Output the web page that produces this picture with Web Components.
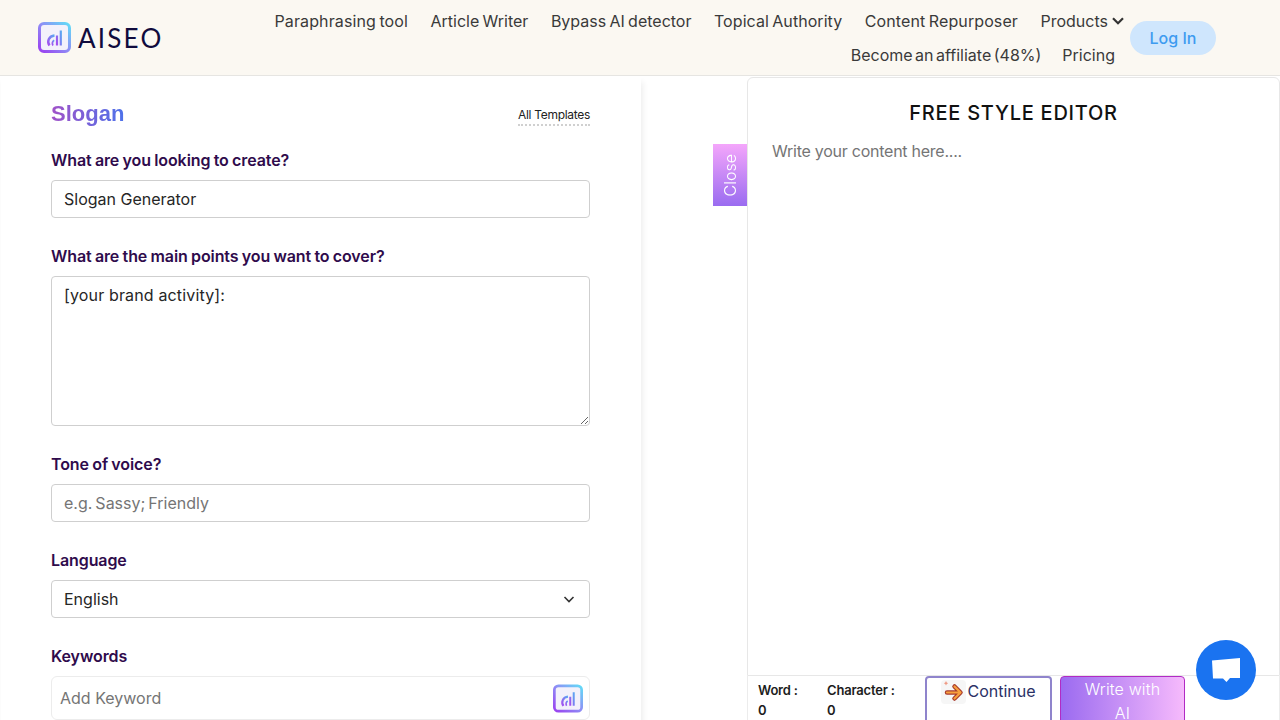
<!doctype html>
<html>
<head>
<meta charset="utf-8">
<title>AISEO Slogan</title>
<style>
html, body { margin: 0; height: 720px; overflow: hidden; background: #fff; font-family: Inter, "Liberation Sans", sans-serif; }
</style>
</head>
<body>
<aiseo-page></aiseo-page>

<script>
function logoMark(id, w, h) {
	return `<svg width="${w}" height="${h}" viewBox="0 0 33 31" fill="none" style="display:block">
		<defs>
			<linearGradient id="${id}" x1="0" y1="1" x2="1" y2="0">
				<stop offset="0" stop-color="#9a40f0"/><stop offset=".5" stop-color="#8f8cf5"/><stop offset="1" stop-color="#62dcf7"/>
			</linearGradient>
			<linearGradient id="${id}-in" x1="0" y1="1" x2="1" y2="0">
				<stop offset="0" stop-color="#a64df0"/><stop offset="1" stop-color="#5aa8f2"/>
			</linearGradient>
		</defs>
		<rect x="1.500" y="1.500" width="30" height="28" rx="4.500" stroke="url(#${id})" stroke-width="3" fill="#f3f1fb"/>
		<path d="M11.500 23.500c-2.800-3.800-.8-9.500 5-10" stroke="url(#${id}-in)" stroke-width="2.400"/>
		<path d="M15 23.500c-1.200-2-.6-4.200 1.200-5.200" stroke="url(#${id}-in)" stroke-width="1.800"/>
		<path d="M19 23.500v-10M22.800 23.500V8.500" stroke="url(#${id}-in)" stroke-width="2.200"/>
	</svg>`;
}

class BrandLogo extends HTMLElement {
	constructor() {
		super();
		this.attachShadow({ mode: 'open' }).innerHTML = `<style>
			:host { display: flex; align-items: center; gap: 7px; }
			span { font: 400 26px/1 Lato, Inter, sans-serif; letter-spacing: 2.200px; color: #100b3d; }
		</style>${logoMark('logo-a', 33, 31)}<span>AISEO</span>`;
	}
}

class NavLink extends HTMLElement {
	constructor() {
		super();
		this.attachShadow({ mode: 'open' }).innerHTML = `<style>
			:host { display: inline-flex; align-items: center; gap: 3px; height: 34px; font-size: 16px; word-spacing: -1.200px; color: #3a3a3a; white-space: nowrap; }
		</style><slot></slot>`;
	}
}

class SiteHeader extends HTMLElement {
	constructor() {
		super();
		this.attachShadow({ mode: 'open' }).innerHTML = `<style>
			:host { display: flex; height: 75px; background: #fbf8f2; border-bottom: 1px solid #e6e5e2; padding-left: 38px; padding-right: 64px; align-items: flex-start; }
			brand-logo { margin-top: 22px; }
			nav { flex: 1; display: flex; flex-direction: column; align-items: flex-end; margin-top: 4px; }
			.row { display: flex; gap: 22.500px; }
			.row.two { padding-right: 10px; gap: 21px; }
			.login { margin: 21px 0 0 5px; width: 86px; height: 34px; border-radius: 17px; background: #cfe6fd; color: #3d9bf0; font-size: 16px; font-weight: 500; display: flex; align-items: center; justify-content: center; }
			svg { display: block; }
		</style>
		<brand-logo></brand-logo>
		<nav>
			<div class="row">
				<nav-link style="letter-spacing:.12px">Paraphrasing tool</nav-link>
				<nav-link>Article Writer</nav-link>
				<nav-link>Bypass AI detector</nav-link>
				<nav-link style="letter-spacing:.06px">Topical Authority</nav-link>
				<nav-link style="letter-spacing:.11px">Content Repurposer</nav-link>
				<nav-link>Products<svg width="14" height="10" viewBox="0 0 14 10" fill="none"><path d="M2 2.200l5 5 5-5" stroke="#333" stroke-width="2.200"/></svg></nav-link>
			</div>
			<div class="row two">
				<nav-link style="word-spacing:-2px">Become an affiliate (48%)</nav-link>
				<nav-link>Pricing</nav-link>
			</div>
		</nav>
		<div class="login">Log In</div>`;
	}
}

class FormField extends HTMLElement {
	constructor() {
		super();
		this.attachShadow({ mode: 'open' }).innerHTML = `<style>
			:host { display: block; margin-bottom: 26px; }
			label { display: block; height: 24px; line-height: 24px; margin-bottom: 8px; font-size: 16px; font-weight: 600; color: #2f0b4c; letter-spacing: -.1px; word-spacing: -.6px; white-space: nowrap; }
		</style><label></label><slot></slot>`;
		this.shadowRoot.querySelector('label').textContent = this.getAttribute('label');
	}
}

class TextBox extends HTMLElement {
	constructor() {
		super();
		this.attachShadow({ mode: 'open' }).innerHTML = `<style>
			:host { display: flex; align-items: center; justify-content: space-between; box-sizing: border-box; height: 38px; padding: 0 12px; border: 1px solid #cfcfcf; border-radius: 4px; background: #fff; font-size: 16px; color: #262626; }
			:host([placeholder]) { color: #757575; }
			:host([soft]) { height: 44px; border-color: #ececec; border-radius: 6px; padding: 0 6px 0 8px; }
		</style><slot></slot>`;
	}
}

class AreaBox extends HTMLElement {
	constructor() {
		super();
		this.attachShadow({ mode: 'open' }).innerHTML = `<style>
			:host { display: block; height: 150px; }
			textarea { display: block; box-sizing: border-box; width: 100%; height: 150px; margin: 0; padding: 7px 12px; border: 1px solid #cfcfcf; border-radius: 4px; font: 400 16px/22px Inter, sans-serif; letter-spacing: .15px; color: #262626; background: #fff; outline: 0; }
		</style><textarea></textarea>`;
		this.shadowRoot.querySelector('textarea').textContent = this.getAttribute('text');
	}
}

class FormPanel extends HTMLElement {
	constructor() {
		super();
		this.attachShadow({ mode: 'open' }).innerHTML = `<style>
			:host { display: block; box-sizing: border-box; width: 640px; height: 644px; overflow: hidden; margin-left: 1px; padding: 22px 51px 0 50px; background: #fff; box-shadow: 2px 6px 6px rgba(0,0,0,.07); }
			.head { display: flex; justify-content: space-between; align-items: center; height: 30px; margin-bottom: 20px; }
			h1 { margin: 1px 0 0; font: 700 22px/30px "Liberation Sans", sans-serif; background: linear-gradient(90deg, #a152c8, #4e72ea); -webkit-background-clip: text; background-clip: text; color: transparent; }
			.all { font-size: 12px; line-height: 16px; color: #222; border-bottom: 2px dotted #d0d0d0; padding-bottom: 1px; margin-top: 7px; letter-spacing: -.3px; }
			svg { display: block; }
		</style>
		<div class="head"><h1>Slogan</h1><div class="all">All Templates</div></div>
		<form-field label="What are you looking to create?"><text-box>Slogan Generator</text-box></form-field>
		<form-field label="What are the main points you want to cover?"><area-box text="[your brand activity]:"></area-box></form-field>
		<form-field label="Tone of voice?"><text-box placeholder style="word-spacing:-1.500px">e.g. Sassy; Friendly</text-box></form-field>
		<form-field label="Language"><text-box>English<svg width="16" height="16" viewBox="0 0 16 16" fill="none"><path d="M3.500 6l4.500 4.500L12.500 6" stroke="#333" stroke-width="1.600"/></svg></text-box></form-field>
		<form-field label="Keywords"><text-box soft placeholder>Add Keyword${logoMark('logo-b', 30, 31)}</text-box></form-field>`;
	}
}

class CloseTab extends HTMLElement {
	constructor() {
		super();
		this.attachShadow({ mode: 'open' }).innerHTML = `<style>
			:host { display: flex; align-items: center; justify-content: center; width: 34px; height: 62px; margin-top: 68px; background: linear-gradient(180deg, #f4a6fb, #9a6cf0); color: #fff; font-size: 16px; font-weight: 300; }
			span { writing-mode: vertical-rl; transform: rotate(180deg); }
		</style><span>Close</span>`;
	}
}

class EditorPane extends HTMLElement {
	constructor() {
		super();
		this.attachShadow({ mode: 'open' }).innerHTML = `<style>
			:host { display: block; box-sizing: border-box; height: 599px; border: 1px solid #e7e7e7; border-radius: 6px 6px 0 0; background: #fff; padding-left: 24px; padding-top: 21px; }
			h2 { margin: 0 0 12px -24px; text-align: center; font-size: 20px; line-height: 29px; font-weight: 500; letter-spacing: .75px; color: #111; }
			p { margin: -1px 0 0; font-size: 16px; line-height: 24px; letter-spacing: -.25px; color: #757575; }
		</style><h2>FREE STYLE EDITOR</h2><p>Write your content here....</p>`;
	}
}

class StatusBar extends HTMLElement {
	constructor() {
		super();
		this.attachShadow({ mode: 'open' }).innerHTML = `<style>
			:host { display: flex; height: 44px; box-sizing: border-box; border: 1px solid #ececec; border-bottom: 0; border-top: 0; background: #fff; overflow: hidden; padding-left: 10px; }
			.stat { font-size: 13px; font-weight: 600; line-height: 20px; letter-spacing: -.2px; color: #1d1d1d; padding-top: 4px; }
			.word { width: 69px; }
			.char { width: 98px; }
			.btn { box-sizing: border-box; height: 60px; border-radius: 4px; font-size: 16px; text-align: center; }
			.cont { width: 127px; border: 2px solid #8f84cc; color: #2b3166; display: flex; justify-content: center; align-items: flex-start; padding-top: 2px; line-height: 22px; }
			.cont svg { display: block; margin-right: 1px; }
			.write { width: 125px; margin-left: 8px; border: 1px solid #b12bc4; background: linear-gradient(90deg, #9b6bf0, #f6bafc); color: #fff; font-weight: 300; letter-spacing: .15px; line-height: 24px; padding: 0 20px; }
		</style>
		<div class="stat word">Word :<br>0</div>
		<div class="stat char">Character :<br>0</div>
		<div class="btn cont"><svg width="25" height="24" viewBox="0 0 25 24" fill="none"><rect width="25" height="24" rx="4" fill="#f6f6f6"/><path d="M6 12.500h13M13.500 6.500l6 6-6 6" stroke="#a83a2c" stroke-width="4.500" stroke-linejoin="round" stroke-linecap="round"/><path d="M6 12.500h13M13.500 6.500l6 6-6 6" stroke="#f7a03e" stroke-width="2.200" stroke-linejoin="round" stroke-linecap="round"/><path d="M5 1l.8 1.500L7.200 3.300l-1.400.7L5 5.500 4.200 4l-1.400-.7 1.400-.8z" fill="#ee9b86"/></svg>Continue</div>
		<div class="btn write">Write with AI</div>`;
	}
}

class ChatLauncher extends HTMLElement {
	constructor() {
		super();
		this.attachShadow({ mode: 'open' }).innerHTML = `<style>
			:host { position: fixed; left: 1196px; top: 640px; width: 60px; height: 60px; border-radius: 50%; background: #1a73f0; display: flex; align-items: center; justify-content: center; }
			svg { display: block; }
		</style><svg width="30" height="28" viewBox="0 0 30 28"><path d="M1 4.500L29 2v20H19l-3.500 4L12 22.500H2z" fill="#fff"/></svg>`;
	}
}

class AiseoPage extends HTMLElement {
	constructor() {
		super();
		this.attachShadow({ mode: 'open' }).innerHTML = `<style>
			:host { display: block; height: 720px; overflow: hidden; }
			main { display: flex; height: 644px; }
			.side { flex: 1; display: flex; justify-content: flex-end; }
			.right { width: 533px; margin-top: 1px; }
		</style>
		<site-header></site-header>
		<main>
			<form-panel></form-panel>
			<div class="side"><close-tab></close-tab></div>
			<div class="right"><editor-pane></editor-pane><status-bar></status-bar></div>
		</main>
		<chat-launcher></chat-launcher>`;
	}
}

customElements.define('brand-logo', BrandLogo);
customElements.define('nav-link', NavLink);
customElements.define('site-header', SiteHeader);
customElements.define('form-field', FormField);
customElements.define('text-box', TextBox);
customElements.define('area-box', AreaBox);
customElements.define('form-panel', FormPanel);
customElements.define('close-tab', CloseTab);
customElements.define('editor-pane', EditorPane);
customElements.define('status-bar', StatusBar);
customElements.define('chat-launcher', ChatLauncher);
customElements.define('aiseo-page', AiseoPage);
</script>
</body>
</html>
